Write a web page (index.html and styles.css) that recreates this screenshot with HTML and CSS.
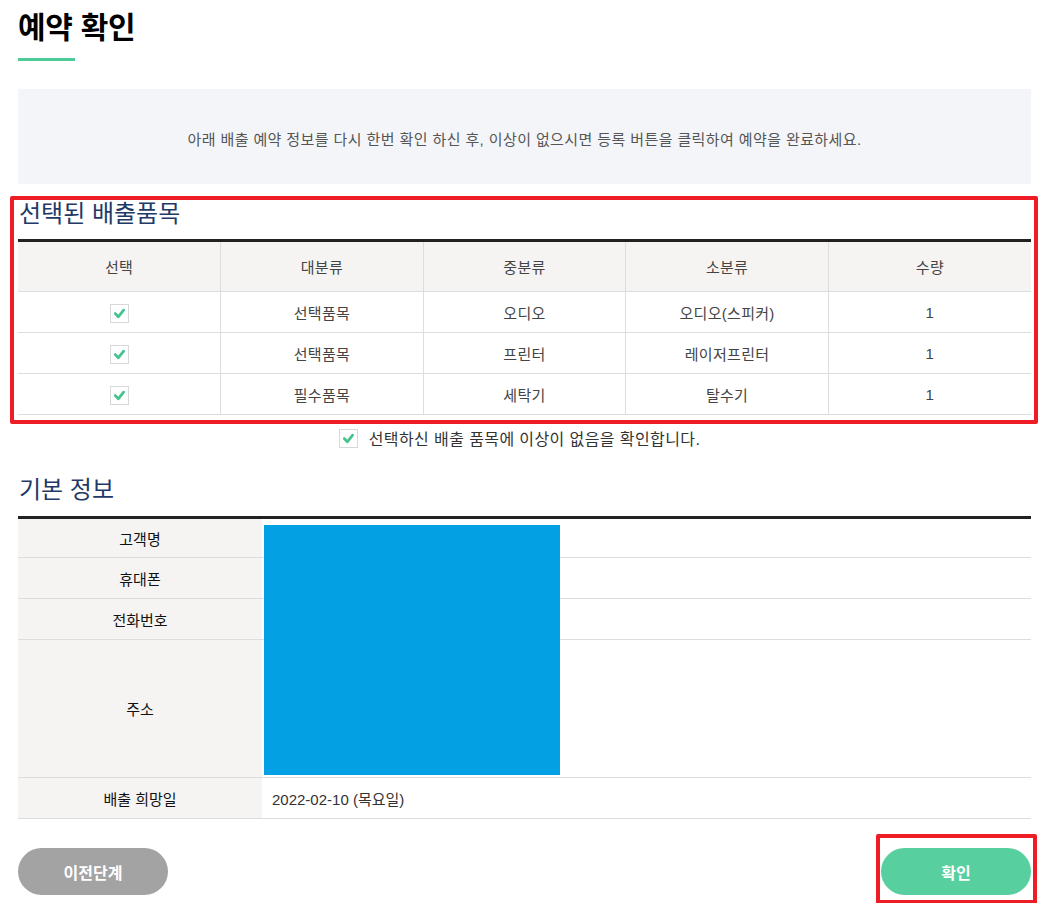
FILE: index.html
```html
<!DOCTYPE html>
<html lang="ko">
<head>
<meta charset="utf-8">
<title>예약 확인</title>
<link rel="stylesheet" href="styles.css">
</head>
<body>
<div class="page">
  <h1 class="title">예약 확인</h1>
  <div class="title-bar"></div>

  <div class="notice">아래 배출 예약 정보를 다시 한번 확인 하신 후, 이상이 없으시면 등록 버튼을 클릭하여 예약을 완료하세요.</div>

  <section class="items marked">
    <h2 class="sec-title">선택된 배출품목</h2>
    <table class="grid">
      <thead>
        <tr><th>선택</th><th>대분류</th><th>중분류</th><th>소분류</th><th>수량</th></tr>
      </thead>
      <tbody>
        <tr><td><span class="chk"><svg viewBox="0 0 19 19" width="19" height="19"><path d="M5.3 9.6 L8.3 12.8 L13.6 6.2" fill="none" stroke="#45c48f" stroke-width="2.8" stroke-linecap="round" stroke-linejoin="round"/></svg></span></td><td>선택품목</td><td>오디오</td><td>오디오(스피커)</td><td>1</td></tr>
        <tr><td><span class="chk"><svg viewBox="0 0 19 19" width="19" height="19"><path d="M5.3 9.6 L8.3 12.8 L13.6 6.2" fill="none" stroke="#45c48f" stroke-width="2.8" stroke-linecap="round" stroke-linejoin="round"/></svg></span></td><td>선택품목</td><td>프린터</td><td>레이저프린터</td><td>1</td></tr>
        <tr><td><span class="chk"><svg viewBox="0 0 19 19" width="19" height="19"><path d="M5.3 9.6 L8.3 12.8 L13.6 6.2" fill="none" stroke="#45c48f" stroke-width="2.8" stroke-linecap="round" stroke-linejoin="round"/></svg></span></td><td>필수품목</td><td>세탁기</td><td>탈수기</td><td>1</td></tr>
      </tbody>
    </table>
  </section>

  <div class="agree">
    <span class="chk"><svg viewBox="0 0 19 19" width="19" height="19"><path d="M5.3 9.6 L8.3 12.8 L13.6 6.2" fill="none" stroke="#45c48f" stroke-width="2.8" stroke-linecap="round" stroke-linejoin="round"/></svg></span>
    <span class="agree-text">선택하신 배출 품목에 이상이 없음을 확인합니다.</span>
  </div>

  <section class="basic">
    <h2 class="sec-title sec-title2">기본 정보</h2>
    <div class="info-wrap">
      <table class="info">
        <tbody>
          <tr class="r1"><th>고객명</th><td></td></tr>
          <tr><th>휴대폰</th><td></td></tr>
          <tr><th>전화번호</th><td></td></tr>
          <tr class="addr"><th>주소</th><td></td></tr>
          <tr><th>배출 희망일</th><td>2022-02-10 (목요일)</td></tr>
        </tbody>
      </table>
      <div class="redact"></div>
    </div>
  </section>

  <div class="buttons">
    <button class="btn btn-prev" type="button">이전단계</button>
    <span class="btn-ok-wrap marked-btn"><button class="btn btn-ok" type="button">확인</button></span>
  </div>
</div>
</body>
</html>
```

FILE: styles.css
```css
* { box-sizing: border-box; }
html, body { margin: 0; padding: 0; background: #fff; }
body {
  font-family: "Liberation Sans", "Noto Sans CJK KR", sans-serif;
  color: #333;
}
.page {
  width: 1013px;
  margin-left: 18px;
  padding-top: 8px;
}
.title {
  margin: 0;
  font-size: 30px;
  line-height: 40px;
  font-weight: 700;
  color: #000;
  letter-spacing: -0.3px;
}
.title-bar {
  width: 57px;
  height: 3px;
  margin-top: 10px;
  background: #4ccb96;
}
.notice {
  margin-top: 28px;
  height: 95px;
  background: #f4f5f9;
  display: flex;
  align-items: center;
  justify-content: center;
  font-size: 15px;
  letter-spacing: 0.4px;
  color: #555;
  padding-top: 3px;
}
.items {
  margin-top: 14px;
  position: relative;
}
.marked::after {
  content: "";
  position: absolute;
  left: -8px;
  right: -7px;
  top: -2px;
  bottom: -9px;
  border: 4px solid #ee1c25;
  border-radius: 2px;
  pointer-events: none;
}
.sec-title {
  margin: 0;
  font-size: 24px;
  line-height: 32px;
  font-weight: 400;
  color: #1f3a66;
  margin-bottom: 9px;
  padding-left: 1px;
}
.grid {
  width: 100%;
  border-collapse: collapse;
  table-layout: fixed;
  border-top: 3px solid #222;
  font-size: 15px;
  letter-spacing: 0.3px;
  color: #444;
}
.grid th, .grid td {
  border-bottom: 1px solid #ddd;
  border-left: 1px solid #ddd;
  text-align: center;
  padding: 0;
}
.grid th:first-child, .grid td:first-child { border-left: 0; }
.grid th {
  height: 51px;
  background: #f5f4f2;
  font-weight: 400;
}
.grid td { height: 41px; }
.chk {
  display: inline-block;
  width: 19px;
  height: 19px;
  border: 1px solid #d8d8d8;
  background: #fff;
  vertical-align: middle;
  position: relative;
}
.chk svg {
  display: block;
  margin: -1px;
}
.grid td .chk { margin-top: 2px; }
.agree {
  margin-top: 11px;
  display: flex;
  align-items: center;
  justify-content: center;
  gap: 11px;
  font-size: 16px;
  letter-spacing: 0.4px;
  color: #333;
  padding-right: 10px;
}
.basic { margin-top: 24px; }
.sec-title2 {
  font-size: 24px;
  margin-bottom: 10px;
}
.info-wrap { position: relative; }
.info {
  width: 100%;
  border-collapse: collapse;
  table-layout: fixed;
  border-top: 3px solid #222;
  font-size: 15px;
}
.info th, .info td {
  border-bottom: 1px solid #ddd;
  height: 41px;
  padding: 0;
}
.info tr.r1 th, .info tr.r1 td { height: 40px; }
.info th {
  width: 244px;
  background: #f5f4f2;
  font-weight: 400;
  color: #111;
  text-align: center;
}
.info td {
  padding-left: 10px;
  font-size: 15px;
  color: #333;
}
.info tr.addr th, .info tr.addr td { height: 138px; }
.redact {
  position: absolute;
  left: 246px;
  top: 9px;
  width: 296px;
  height: 250px;
  background: #03a0e4;
}
.buttons {
  margin-top: 29px;
  padding-bottom: 8px;
  display: flex;
  justify-content: space-between;
  align-items: center;
}
.btn {
  width: 150px;
  height: 47px;
  border: 0;
  border-radius: 24px;
  color: #fff;
  font-family: "Liberation Sans", "Noto Sans CJK KR", sans-serif;
  font-size: 16px;
  font-weight: 700;
  cursor: pointer;
  padding: 0;
}
.btn-prev { background: #a3a3a3; }
.btn-ok { background: #57cf9e; display: block; }
.btn-ok-wrap { position: relative; display: block; }
.marked-btn::after {
  content: "";
  position: absolute;
  left: -5px;
  right: -6px;
  top: -14px;
  bottom: -9px;
  border: 4px solid #ee1c25;
  border-radius: 2px;
  pointer-events: none;
}
```
